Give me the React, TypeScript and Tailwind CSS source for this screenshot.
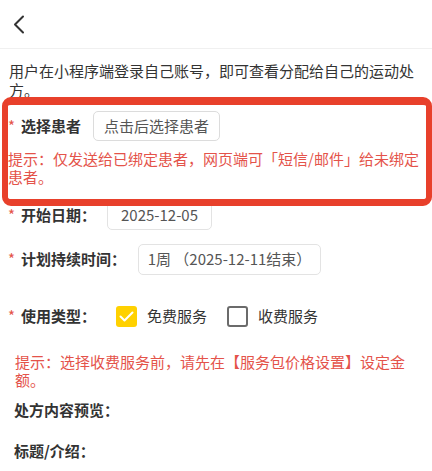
import React from "react";

const font = { fontFamily: '"Noto Sans CJK SC", "Noto Sans", sans-serif' };

function Star() {
  return <span className="inline-block w-[13px] text-[#e4534a]">*</span>;
}

export default function App() {
  return (
    <div className="relative w-[432px] h-[471px] overflow-hidden bg-white text-[15px] text-[#333]" style={font}>
      {/* header */}
      <div className="h-[49px] border-b border-[#f0f0f0] flex items-center pl-[13px]">
        <svg width="12" height="19" viewBox="0 0 12 19" fill="none">
          <path d="M10 1.5 L2 9.5 L10 17.5" stroke="#333" strokeWidth="2" strokeLinecap="round" strokeLinejoin="round" />
        </svg>
      </div>

      {/* description */}
      <p className="mt-[12px] px-[9px] leading-[19px]">
        用户在小程序端登录自己账号，即可查看分配给自己的运动处方。
      </p>

      {/* select patient */}
      <div className="mt-[12px] pl-[8px] flex items-center h-[30px]">
        <Star />
        <span className="font-bold">选择患者</span>
        <div className="ml-[12px] h-[30px] px-[10px] flex items-center border border-[#dcdcdc] rounded-[5px] text-[#555]">
          点击后选择患者
        </div>
      </div>
      <p className="mt-[9px] pl-[8px] pr-[6px] leading-[18px] text-[#e4534a]">
        提示：仅发送给已绑定患者，网页端可「短信/邮件」给未绑定患者。
      </p>

      {/* start date */}
      <div className="mt-[14px] pl-[8px] flex items-center h-[30px]">
        <Star />
        <span className="font-bold">开始日期：</span>
        <div className="ml-[11px] h-[30px] w-[105px] flex items-center justify-center border border-[#e3e3e3] rounded-[5px] text-[#555]">
          2025-12-05
        </div>
      </div>

      {/* duration */}
      <div className="mt-[14px] pl-[8px] flex items-center h-[31px]">
        <Star />
        <span className="font-bold">计划持续时间：</span>
        <div className="ml-[12px] h-[31px] w-[183px] flex items-center justify-center border border-[#e3e3e3] rounded-[5px] text-[#555] whitespace-pre">
          1周 （2025-12-11结束）
        </div>
      </div>

      {/* use type */}
      <div className="mt-[26px] pl-[8px] flex items-center h-[30px]">
        <Star />
        <span className="font-bold">使用类型：</span>
        <span className="ml-[20px] w-[21px] h-[21px] rounded-[3px] bg-[#ffd100] flex items-center justify-center">
          <svg width="15" height="11" viewBox="0 0 15 11" fill="none">
            <path d="M1.5 5.5 L5.5 9.5 L13.5 1.5" stroke="#fff" strokeWidth="2" strokeLinecap="round" strokeLinejoin="round" />
          </svg>
        </span>
        <span className="ml-[10px] text-[#333]">免费服务</span>
        <span className="ml-[20px] w-[21px] h-[21px] rounded-[3px] border-[2.5px] border-[#6b6b6b] bg-white" />
        <span className="ml-[10px] text-[#333]">收费服务</span>
      </div>

      <p className="mt-[22px] pl-[15px] pr-[20px] leading-[18px] text-[#e4534a]">
        提示：选择收费服务前，请先在【服务包价格设置】设定金额。
      </p>

      <p className="mt-[12px] pl-[14px] font-bold leading-[18px]">处方内容预览：</p>
      <p className="mt-[23px] pl-[14px] font-bold leading-[18px]">标题/介绍：</p>

      {/* annotation box */}
      <div className="absolute left-[2px] top-[97px] w-[430px] h-[109px] border-[6px] border-t-[8px] border-b-[7px] border-[#e8402b] rounded-[9px] pointer-events-none" />
    </div>
  );
}
